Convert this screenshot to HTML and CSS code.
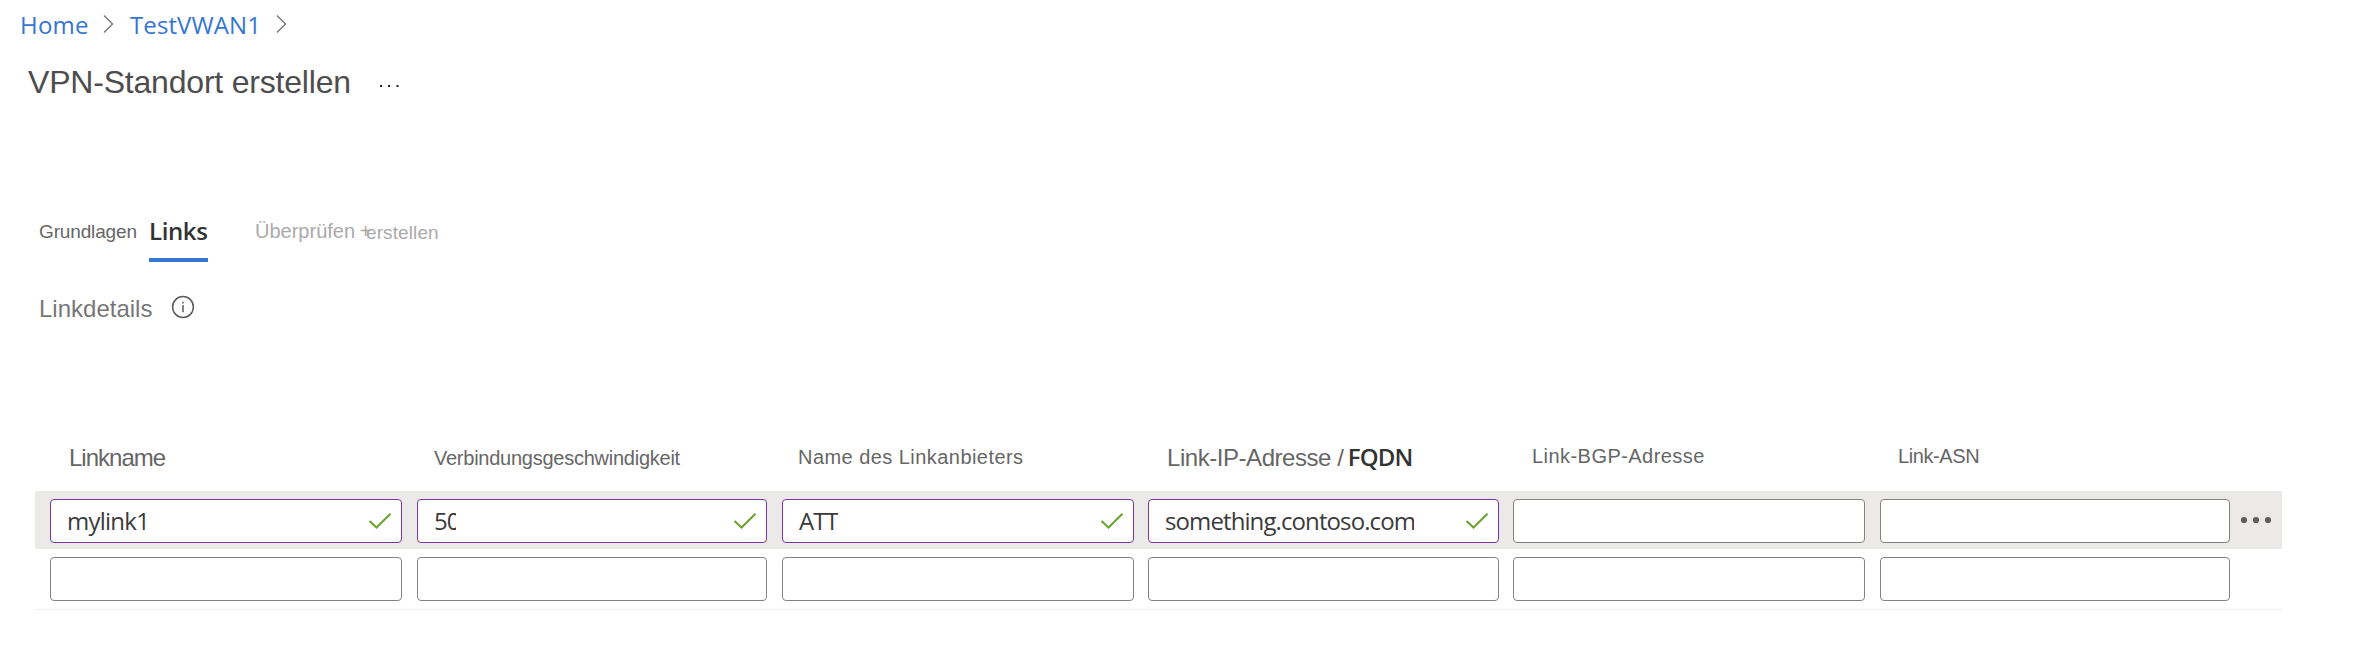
FILE: index.html
```html
<!DOCTYPE html>
<html lang="de">
<head>
<meta charset="utf-8">
<title>VPN-Standort erstellen</title>
<link rel="stylesheet" href="styles.css">
</head>
<body>
<nav class="breadcrumb">
  <a class="crumb crumb-home">Home</a>
  <svg class="chevron" width="12" height="20" viewBox="0 0 12 20"><path d="M1 1.5 9.5 10 1 18.5"/></svg>
  <a class="crumb crumb-wan">TestVWAN1</a>
  <svg class="chevron" width="12" height="20" viewBox="0 0 12 20"><path d="M1 1.5 9.5 10 1 18.5"/></svg>
</nav>
<header class="heading">
  <h1 class="title">VPN-Standort erstellen</h1>
  <svg class="title-more" width="22" height="4" viewBox="0 0 22 4"><path d="M1 1h2v2H1zM9 1h2v2H9zM17.5 1h2v2h-2z"/></svg>
</header>
<div class="tabs">
  <span class="tab tab-basics">Grundlagen</span>
  <span class="tab tab-links">Links</span>
  <span class="tab tab-review">Überprüfen <span class="plus">+</span></span>
  <span class="tab tab-create">erstellen</span>
</div>
<section class="section">
  <h2 class="section-title">Linkdetails</h2>
  <svg class="info" width="24" height="24" viewBox="0 0 24 24"><circle cx="12" cy="12" r="10.4"/><path d="M12 10v7.2M12 6.8v1.8"/></svg>
</section>
<main class="grid">
  <div class="row head">
    <div class="th big name">Linkname</div>
    <div class="th speed">Verbindungsgeschwindigkeit</div>
    <div class="th provider">Name des Linkanbieters</div>
    <div class="th big ip">Link-IP-Adresse / <b class="fqdn">FQDN</b></div>
    <div class="th bgp">Link-BGP-Adresse</div>
    <div class="th asn">Link-ASN</div>
  </div>
  <div class="row active">
    <div class="field valid"><span class="value v-name">mylink1</span><svg class="check" width="24" height="18" viewBox="0 0 24 18"><path d="M1.5 9 8.5 15.5 22.5 1.8"/></svg></div>
    <div class="field valid"><span class="value v-speed">50</span><svg class="check" width="24" height="18" viewBox="0 0 24 18"><path d="M1.5 9 8.5 15.5 22.5 1.8"/></svg></div>
    <div class="field valid"><span class="value v-provider">ATT</span><svg class="check" width="24" height="18" viewBox="0 0 24 18"><path d="M1.5 9 8.5 15.5 22.5 1.8"/></svg></div>
    <div class="field valid"><span class="value v-ip">something.contoso.com</span><svg class="check" width="24" height="18" viewBox="0 0 24 18"><path d="M1.5 9 8.5 15.5 22.5 1.8"/></svg></div>
    <div class="field"></div>
    <div class="field"></div>
    <svg class="row-more" width="32" height="8" viewBox="0 0 32 8"><circle cx="4" cy="4" r="3.1"/><circle cx="16" cy="4" r="3.1"/><circle cx="28" cy="4" r="3.1"/></svg>
  </div>
  <div class="row last">
    <div class="field"></div>
    <div class="field"></div>
    <div class="field"></div>
    <div class="field"></div>
    <div class="field"></div>
    <div class="field"></div>
  </div>
</main>
</body>
</html>
```
FILE: styles.css
```css
* { box-sizing: border-box; }
body {
  margin: 0;
  background: #fff;
  font-family: "Liberation Sans", Arial, sans-serif;
  white-space: nowrap;
}
svg { flex: none; display: block; }

.breadcrumb { display: flex; align-items: center; height: 50px; padding-left: 20px; }
.crumb { font: 24px/50px "Open Sans", "Noto Sans", sans-serif; color: #3476d2; }
.crumb-home { width: 83px; letter-spacing: 0.2px; }
.crumb-wan { width: 146px; margin-left: 15px; letter-spacing: 0.1px; }
.chevron { fill: none; stroke: #777; stroke-width: 1.4; margin-top: -2px; }

.heading { display: flex; align-items: center; height: 36px; margin-top: 14px; padding-left: 28px; }
.title { margin: 0; width: 351px; font-size: 32px; line-height: 36px; font-weight: 400; letter-spacing: -0.2px; color: #4d4d4d; }
.title-more { fill: #222; margin-top: 7px; }

.tabs { display: flex; align-items: flex-start; height: 56px; margin-top: 106px; padding-left: 39px; }
.tab { font-size: 19px; line-height: 52px; color: #666; }
.tab-basics { width: 110px; letter-spacing: -0.15px; }
.tab-links {
  width: 59px; height: 56px; border-bottom: 4px solid #3476d2;
  font: 600 24px/50px "Open Sans", "Noto Sans", sans-serif;
  letter-spacing: -0.4px; color: #333;
}
.tab-review { width: 111px; margin-left: 47px; font-size: 20px; line-height: 50px; letter-spacing: 0; color: #aaa; }
.plus { margin-left: -1px; }
.tab-create { line-height: 54px; letter-spacing: 0.1px; color: #aaa; }

.section { display: flex; align-items: center; height: 40px; margin-top: 26px; padding-left: 39px; }
.section-title { margin: 2px 0 0; width: 132px; font-size: 24px; line-height: 40px; font-weight: 400; color: #777; }
.info { fill: none; stroke: #5c5c5c; stroke-width: 1.5; margin-top: -2px; }

.grid { width: 2247px; margin: 110px 0 0 35px; }
.row {
  display: grid;
  grid-template-columns: 367px 365px 366px 365px 367px 350px 1fr;
  padding-left: 15px;
}
.head { height: 53px; }
.th { font-size: 20px; line-height: 40px; color: #666; padding-left: 17px; }
.big { font-size: 24px; }
.name { padding-left: 19px; letter-spacing: -1px; }
.speed { padding-left: 17px; letter-spacing: -0.25px; }
.provider { line-height: 38px; }
.bgp, .asn { line-height: 36px; }
.provider { padding-left: 16px; letter-spacing: 0.45px; }
.ip { padding-left: 19px; letter-spacing: -0.45px; }
.fqdn {
  font: 600 24px/1 "Open Sans", "Noto Sans", sans-serif;
  letter-spacing: -0.8px; color: #333; margin-left: -2px;
}
.bgp { padding-left: 19px; letter-spacing: 0.45px; }
.asn { padding-left: 18px; letter-spacing: -0.4px; }

.active { height: 58px; padding-top: 8px; background: #ebeae8; }
.last { height: 61px; padding-top: 8px; border-bottom: 1px solid #eee; }
.field {
  display: flex; justify-content: space-between; align-items: center;
  width: 352px; height: 44px; padding: 0 9px 0 16px;
  border: 1px solid #858381; border-radius: 4px; background: #fff;
}
.field:nth-child(2), .field:nth-child(6) { width: 350px; }
.field:nth-child(4) { width: 351px; }
.valid { border-color: #7c36a1; }
.value {
  font: 24px/40px "Open Sans", "Noto Sans", sans-serif;
  color: #3b3b3b; overflow: hidden;
}
.v-name { letter-spacing: -0.75px; }
.v-speed { width: 22px; letter-spacing: -1px; }
.v-provider { letter-spacing: -0.9px; }
.v-ip { width: 249px; letter-spacing: -0.9px; }
.check { fill: none; stroke: #6ba32d; stroke-width: 2; }
.row-more { fill: #5f5d5b; margin: 17px 0 0 10px; }
```
